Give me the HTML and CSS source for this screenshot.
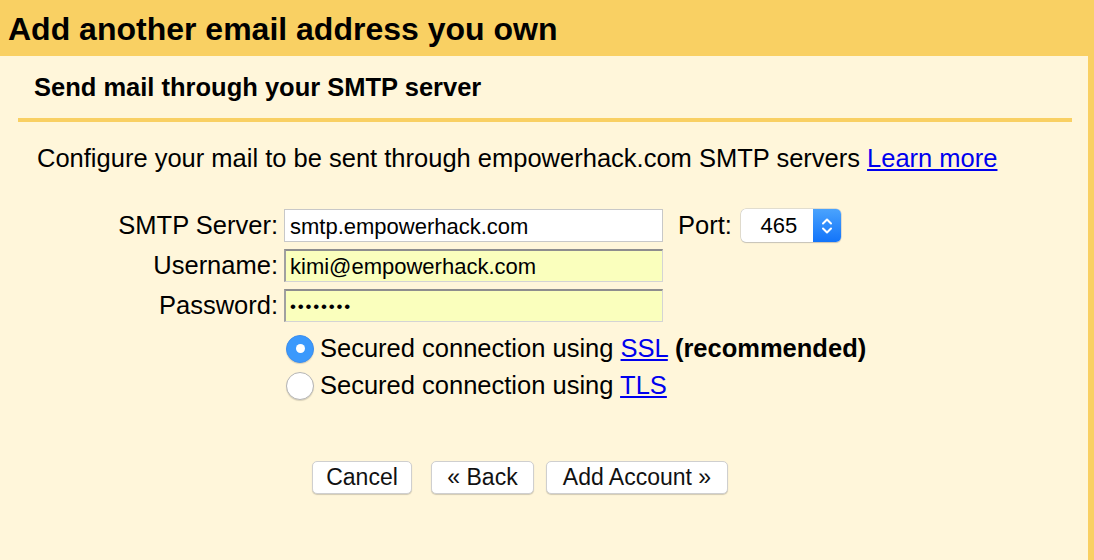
FILE: index.html
```html
<!DOCTYPE html>
<html>
<head>
<meta charset="utf-8">
<link rel="stylesheet" href="styles.css">
</head>
<body>
<div class="banner"><h1 class="title">Add another email address you own</h1></div>
<div class="panel">
  <div class="subhead"><h2 class="subtitle">Send mail through your SMTP server</h2></div>
  <p class="intro">Configure your mail to be sent through empowerhack.com SMTP servers <a href="#">Learn more</a></p>
  <div class="form">
    <label class="lbl">SMTP Server:</label>
    <div class="row-ctl">
      <div class="field plain">smtp.empowerhack.com</div>
      <span class="port-lbl">Port:</span>
      <div class="select"><span class="sel-val">465</span><span class="sel-btn"><svg width="14" height="22" viewBox="0 0 14 22"><path d="M3 8.5 L7 4.5 L11 8.5 M3 13.5 L7 17.5 L11 13.5" fill="none" stroke="#fff" stroke-width="2" stroke-linecap="round" stroke-linejoin="round"/></svg></span></div>
    </div>
    <label class="lbl">Username:</label>
    <div class="row-ctl"><div class="field auto">kimi@empowerhack.com</div></div>
    <label class="lbl">Password:</label>
    <div class="row-ctl"><div class="field auto pw">••••••••</div></div>
  </div>
  <div class="radios">
    <div class="radio-row"><span class="radio on"></span><span>Secured connection using <a href="#">SSL</a> <b>(recommended)</b></span></div>
    <div class="radio-row"><span class="radio"></span><span>Secured connection using <a href="#">TLS</a></span></div>
  </div>
  <div class="buttons">
    <button class="btn b-cancel">Cancel</button>
    <button class="btn b-back">« Back</button>
    <button class="btn b-add">Add Account »</button>
  </div>
</div>
</body>
</html>
```
FILE: styles.css
```css
html, body { margin: 0; padding: 0; }
body {
  width: 1094px; height: 560px; overflow: hidden;
  background: #fff6da;
  font-family: "Liberation Sans", Arial, sans-serif;
  color: #000;
}
.banner {
  background: #f9d063;
  height: 56px;
  display: flex; align-items: center;
  padding-left: 8px;
}
.title { margin: 3px 0 0 0; font-size: 32px; font-weight: bold; }
.panel {
  width: 1088px; height: 504px;
  border-right: 6px solid #f9d063;
  box-sizing: content-box;
}
.subhead {
  margin: 0 16px 0 18px;
  height: 62px;
  border-bottom: 4px solid #f9d063;
  display: flex; align-items: center;
  padding-left: 16px;
}
.subtitle { margin: 0; font-size: 25.5px; font-weight: bold; }
.intro { margin: 21px 0 0 37px; font-size: 25.5px; line-height: 30px; }
a { color: #0000ee; text-decoration: underline; }
.form {
  margin-top: 36px;
  display: grid;
  grid-template-columns: 278px auto;
  grid-auto-rows: 33px;
  column-gap: 6px;
  row-gap: 7px;
  font-size: 25.5px;
  align-items: center;
}
.lbl { text-align: right; }
.row-ctl { display: flex; align-items: center; }
.field {
  width: 379px; height: 33px; box-sizing: border-box;
  padding: 0 5px; font-size: 22px; line-height: 33px;
  border: 1px solid #c8c8c8; background: #fff;
}
.field.auto {
  background: #faffbd;
  border-top: 2px solid #8e8e8e; border-left: 2px solid #a0a0a0;
  border-right: 1px solid #d4d4d4; border-bottom: 1px solid #d4d4d4;
  padding-left: 4px; line-height: 31px;
}
.pw { font-size: 17px; letter-spacing: 1.8px; }
.port-lbl { margin-left: 15px; margin-right: 9px; }
.select {
  width: 100px; height: 33px; box-sizing: border-box;
  display: flex; border-radius: 5px; overflow: hidden;
  background: #fff; box-shadow: 0 0 0 0.5px #c4c4c4, 0 1px 1px rgba(0,0,0,0.2);
}
.sel-val { flex: 1; text-align: center; font-size: 22px; line-height: 33px; padding-left: 4px; }
.sel-btn {
  width: 28px; background: linear-gradient(#4aa3fd, #1274fa);
  display: flex; align-items: center; justify-content: center;
}
.radios { margin: 8px 0 0 286px; font-size: 25.5px; }
.radio-row { display: flex; align-items: center; height: 37px; }
.radio {
  width: 28px; height: 28px; border-radius: 50%; box-sizing: border-box;
  margin-right: 6px; background: #fff; border: 1px solid #b5b5b5;
  box-shadow: 0 1px 1px rgba(0,0,0,0.15);
  display: flex; align-items: center; justify-content: center;
}
.radio.on { background: #3b99fc; border-color: #3b8ef0; }
.radio.on::after { content: ""; width: 9px; height: 9px; border-radius: 50%; background: #fff; }
.buttons {
  margin-top: 57px; padding-left: 312px;
  display: flex;
}
.btn {
  height: 33px; font-family: "Liberation Sans", Arial, sans-serif; font-size: 23px;
  background: #fff; border: 1px solid #cfcfcf; border-radius: 5px;
  box-shadow: 0 1px 1px rgba(0,0,0,0.18); color: #111; padding: 0;
}
.b-cancel { width: 100px; }
.b-back { width: 103px; margin-left: 19px; }
.b-add { width: 182px; margin-left: 12px; }
```
